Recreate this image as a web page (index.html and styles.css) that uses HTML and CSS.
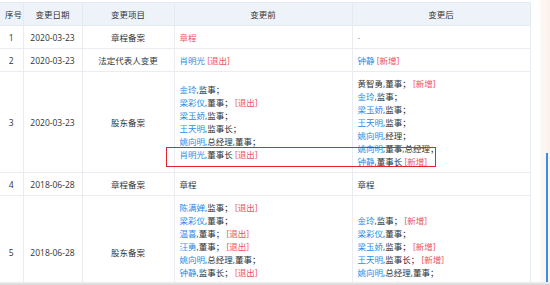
FILE: index.html
```html
<!DOCTYPE html>
<html lang="zh-CN">
<head>
<meta charset="utf-8">
<title>变更记录</title>
<link rel="stylesheet" href="styles.css">
</head>
<body>
<div class="page">
  <div class="main">
    <div class="table-wrap">
      <table class="changes">
        <colgroup>
          <col class="c-no"><col class="c-date"><col class="c-item"><col class="c-before"><col class="c-after">
        </colgroup>
        <thead>
          <tr><th>序号</th><th>变更日期</th><th>变更项目</th><th>变更前</th><th>变更后</th></tr>
        </thead>
        <tbody>
          <tr>
            <td class="ctr">1</td><td class="ctr">2020-03-23</td><td class="ctr">章程备案</td>
            <td><span class="red">章程</span></td>
            <td><span class="dash">-</span></td>
          </tr>
          <tr>
            <td class="ctr">2</td><td class="ctr">2020-03-23</td><td class="ctr">法定代表人变更</td>
            <td><span class="lnk">肖明光</span> <span class="red">[退出]</span></td>
            <td><span class="lnk">钟静</span> <span class="red">[新增]</span></td>
          </tr>
          <tr>
            <td class="ctr">3</td><td class="ctr">2020-03-23</td><td class="ctr">股东备案</td>
            <td>
              <div><span class="lnk">金玲</span>,监事；</div>
              <div><span class="lnk">梁彩仪</span>,董事； <span class="red">[退出]</span></div>
              <div><span class="lnk">梁玉娇</span>,监事；</div>
              <div><span class="lnk">王天明</span>,监事长；</div>
              <div><span class="lnk">姚向明</span>,总经理,董事；</div>
              <div><span class="lnk">肖明光</span>,董事长 <span class="red">[退出]</span></div>
            </td>
            <td>
              <div>黄智勇,董事； <span class="red">[新增]</span></div>
              <div><span class="lnk">金玲</span>,监事；</div>
              <div><span class="lnk">梁玉娇</span>,监事；</div>
              <div><span class="lnk">王天明</span>,监事；</div>
              <div><span class="lnk">姚向明</span>,经理；</div>
              <div><span class="lnk">姚向明</span>,董事,总经理；</div>
              <div><span class="lnk">钟静</span>,董事长 <span class="red">[新增]</span></div>
            </td>
          </tr>
          <tr>
            <td class="ctr">4</td><td class="ctr">2018-06-28</td><td class="ctr">章程备案</td>
            <td>章程</td>
            <td>章程</td>
          </tr>
          <tr>
            <td class="ctr">5</td><td class="ctr">2018-06-28</td><td class="ctr">股东备案</td>
            <td>
              <div><span class="lnk">陈满婵</span>,监事； <span class="red">[退出]</span></div>
              <div><span class="lnk">梁彩仪</span>,董事；</div>
              <div><span class="lnk">温喜</span>,董事； <span class="red">[退出]</span></div>
              <div><span class="lnk">汪勇</span>,董事； <span class="red">[退出]</span></div>
              <div><span class="lnk">姚向明</span>,总经理,董事；</div>
              <div><span class="lnk">钟静</span>,监事长； <span class="red">[退出]</span></div>
              <div><span class="lnk">肖明光</span>,董事长；</div>
              <div><span class="lnk">黄智勇</span>,董事； <span class="red">[退出]</span></div>
            </td>
            <td>
              <div><span class="lnk">金玲</span>,监事； <span class="red">[新增]</span></div>
              <div><span class="lnk">梁彩仪</span>,董事；</div>
              <div><span class="lnk">梁玉娇</span>,监事； <span class="red">[新增]</span></div>
              <div><span class="lnk">王天明</span>,监事长； <span class="red">[新增]</span></div>
              <div><span class="lnk">姚向明</span>,总经理,董事；</div>
              <div><span class="lnk">肖明光</span>,董事长；</div>
            </td>
          </tr>
        </tbody>
      </table>
      <div class="highlight"></div>
    </div>
    <div class="side">
      <div class="side-top"></div>
      <div class="side-line"></div>
    </div>
  </div>
  <div class="bottom-bar"></div>
</div>
</body>
</html>
```
FILE: styles.css
```css
html, body {
  margin: 0;
  padding: 0;
  background: #ffffff;
}

.page {
  display: flex;
  flex-direction: column;
  width: 550px;
  height: 285px;
  overflow: hidden;
  font-family: "Open Sans", "Noto Sans CJK SC", sans-serif;
  font-size: 8.5px;
  color: #333333;
}

.main {
  display: flex;
  height: 282px;
  overflow: hidden;
}

.table-wrap {
  position: relative;
  width: 530px;
  flex: none;
  padding-top: 2px;
}

.changes {
  width: 530px;
  table-layout: fixed;
  border-collapse: collapse;
}

.c-no { width: 23px; }
.c-date { width: 59px; }
.c-item { width: 92px; }
.c-before { width: 178px; }
.c-after { width: 178px; }

.changes th,
.changes td {
  border: 1px solid #e9edf2;
  padding: 4.5px 5px;
  line-height: 13px;
  font-weight: normal;
  vertical-align: middle;
  text-align: left;
  white-space: nowrap;
  overflow: hidden;
}

.changes th:first-child,
.changes td:first-child {
  border-left: none;
}

.changes th {
  background: #eef3f9;
  text-align: center;
  color: #333333;
  border-color: #e4eaf2;
}

.changes td.ctr {
  text-align: center;
}

.lnk {
  color: #2b8ae8;
}

.red {
  color: #f0505a;
}

.dash {
  color: #999999;
}

.highlight {
  position: absolute;
  left: 166px;
  top: 147px;
  width: 268px;
  height: 18px;
  border: 1.5px solid #e1252b;
  pointer-events: none;
}

.side {
  display: flex;
  flex-direction: column;
  align-items: flex-end;
  width: 10px;
  margin-left: 10px;
  background: linear-gradient(90deg, #fdf9f6, #fbf1ec);
}

.side-top {
  height: 153px;
  flex: none;
}

.side-line {
  flex: 1;
  width: 2px;
  margin-right: 2px;
  background: #3b8fe0;
}

.bottom-bar {
  height: 3px;
  flex: none;
  background: linear-gradient(#f1f1f1, #d6d6d6);
}
```
